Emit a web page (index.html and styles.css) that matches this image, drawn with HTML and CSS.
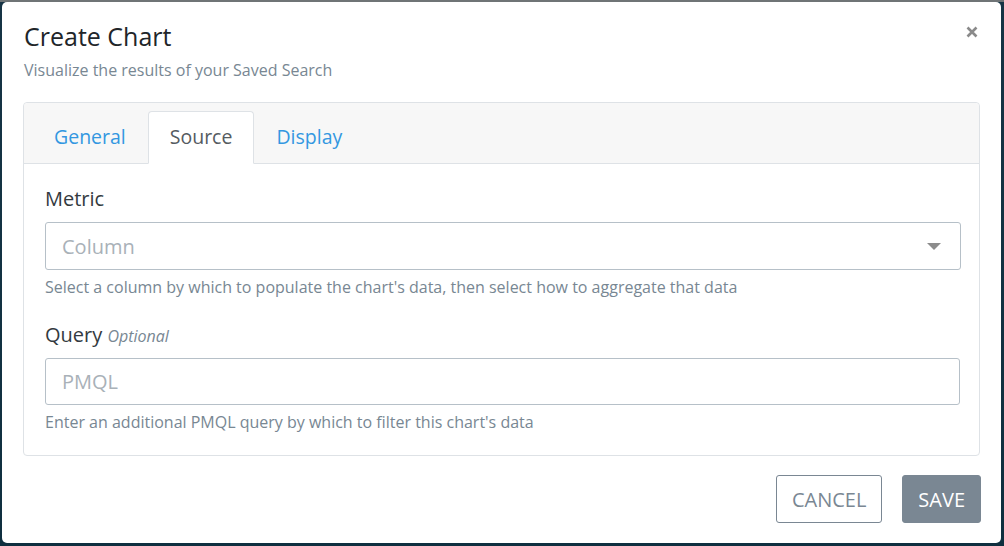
FILE: index.html
```html
<!DOCTYPE html>
<html lang="en">
<head>
<meta charset="utf-8">
<title>Create Chart</title>
<link rel="stylesheet" href="styles.css">
</head>
<body>
<div class="modal">
  <div class="modal-header">
    <div class="titles">
      <h1 class="title">Create Chart</h1>
      <p class="subtitle">Visualize the results of your Saved Search</p>
    </div>
    <button class="close" aria-label="Close">
      <svg width="12" height="12" viewBox="0 0 12 12"><path d="M1.5 1.5 L10.5 10.5 M10.5 1.5 L1.5 10.5" stroke="#8a8a8a" stroke-width="2.6" stroke-linecap="butt"/></svg>
    </button>
  </div>
  <div class="card">
    <div class="card-header">
      <ul class="tabs">
        <li class="tab">General</li>
        <li class="tab active">Source</li>
        <li class="tab">Display</li>
      </ul>
    </div>
    <div class="card-body">
      <div class="field">
        <label class="label">Metric</label>
        <div class="select">
          <span class="placeholder">Column</span>
          <span class="caret"></span>
        </div>
        <p class="help">Select a column by which to populate the chart's data, then select how to aggregate that data</p>
      </div>
      <div class="field">
        <label class="label">Query <em class="optional">Optional</em></label>
        <div class="input"><span class="placeholder">PMQL</span></div>
        <p class="help">Enter an additional PMQL query by which to filter this chart's data</p>
      </div>
    </div>
  </div>
  <div class="modal-footer">
    <button class="btn btn-outline">CANCEL</button>
    <button class="btn btn-solid">SAVE</button>
  </div>
</div>
</body>
</html>
```
FILE: styles.css
```css
* { box-sizing: border-box; }
html, body { margin: 0; padding: 0; }
body {
  width: 1004px;
  height: 546px;
  overflow: hidden;
  background: linear-gradient(#6f7476 0, #6f7476 2px, #163445 2px, #0f2f3f 100%);
  font-family: "Open Sans", "Noto Sans", sans-serif;
  padding: 2px 3px 3px 2px;
}
.modal {
  background: #fff;
  border-radius: 5px;
  height: 541px;
  padding: 17px 21px 0 21px;
  display: flex;
  flex-direction: column;
}
.modal-header {
  display: flex;
  justify-content: space-between;
  align-items: flex-start;
  padding-left: 1px;
}
.title {
  margin: 0;
  font-size: 25px;
  font-weight: 400;
  line-height: 34px;
  color: #212529;
}
.subtitle {
  margin: 7px 0 0 0;
  font-size: 16px;
  line-height: 20px;
  color: #788793;
}
.close {
  border: 0;
  background: none;
  padding: 0;
  margin: 7px 2px 0 0;
  line-height: 0;
  cursor: pointer;
}
.card {
  margin-top: 22px;
  border: 1px solid #dee2e6;
  border-radius: 4px;
}
.card-header {
  background: #f7f7f7;
  border-bottom: 1px solid #dee2e6;
  padding: 8px 8px 0 8px;
  border-radius: 4px 4px 0 0;
}
.tabs {
  list-style: none;
  margin: 0 0 -1px 0;
  padding: 0;
  display: flex;
}
.tab {
  font-size: 19.5px;
  line-height: 27px;
  padding: 11px 21px 13px 21px;
  color: #3397e1;
  border: 1px solid transparent;
  border-radius: 4px 4px 0 0;
  cursor: pointer;
}
.tab.active {
  color: #555b61;
  background: #fff;
  border-color: #dee2e6 #dee2e6 #fff #dee2e6;
}
.card-body {
  padding: 22px 18px 8px 21px;
}
.field { margin-bottom: 24px; }
.field:last-child { margin-bottom: 14px; }
.label {
  display: block;
  font-size: 20px;
  line-height: 26px;
  color: #333a40;
  margin-bottom: 10px;
}
.field + .field .label { margin-bottom: 9px; }
.optional {
  font-size: 16px;
  color: #788793;
}
.select, .input {
  height: 48px;
  border: 1px solid #b6c0c8;
  border-radius: 3px;
  display: flex;
  align-items: center;
  justify-content: space-between;
  padding: 0 19px 0 16px;
}
.input { height: 47px; margin-right: 1px; }
.placeholder {
  font-size: 20px;
  color: #a9b1b8;
}
.caret {
  width: 0;
  height: 0;
  border-left: 7px solid transparent;
  border-right: 7px solid transparent;
  border-top: 7px solid #8c8c8c;
}
.help {
  margin: 6px 0 0 0;
  font-size: 16px;
  line-height: 22px;
  color: #788793;
}
.modal-footer {
  display: flex;
  justify-content: flex-end;
  gap: 20px;
  margin-top: 19px;
  margin-right: -1px;
}
.btn {
  font-family: inherit;
  font-size: 20px;
  height: 48px;
  border-radius: 3px;
  padding: 0 15px;
  cursor: pointer;
}
.btn-outline {
  background: #fff;
  border: 1px solid #7a8793;
  color: #7a8793;
}
.btn-solid {
  background: #7a8793;
  border: 1px solid #7a8793;
  color: #fff;
}
```
